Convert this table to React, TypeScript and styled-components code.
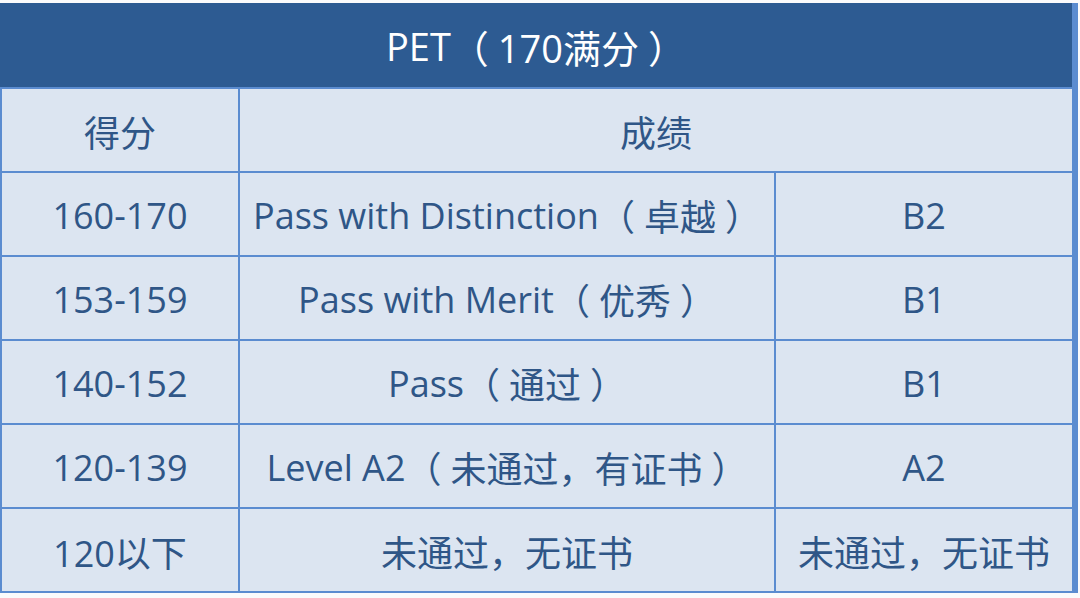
import React from "react";
import styled, { createGlobalStyle } from "styled-components";

const Global = createGlobalStyle`
  html, body { margin: 0; padding: 0; background: #fbfbfc; }
  body { font-family: "Open Sans", "Noto Sans CJK SC", sans-serif; }
`;

const Page = styled.div`
  width: 1080px;
  height: 598px;
  padding-top: 3px;
  box-sizing: border-box;
  background: #fbfbfc;
  overflow: hidden;
`;

const Grid = styled.div`
  display: grid;
  width: 1074px;
  grid-template-columns: 236px 534px 296px;
  grid-template-rows: 84px repeat(6, 82px);
  gap: 2px;
  padding: 0 2px 2px 2px;
  background: #5b8cd0;
`;

const Title = styled.div`
  grid-column: 1 / -1;
  margin: 0 0 0 -2px;
  background: #2d5b92;
  color: #ffffff;
  display: flex;
  align-items: center;
  justify-content: center;
  font-size: 38px;
  font-weight: 400;
  padding-top: 2px;
`;

const Cell = styled.div<{ $span?: number }>`
  grid-column: span ${(p) => p.$span ?? 1};
  background: #dce5f1;
  color: #2f5687;
  display: flex;
  align-items: center;
  justify-content: center;
  font-size: 36px;
  font-weight: 400;
  white-space: nowrap;
  padding-top: 2px;
`;

const OpenParen = styled.span`
  font-family: "Noto Sans CJK SC", sans-serif;
  margin-right: 9px;
`;

const CloseParen = styled.span`
  font-family: "Noto Sans CJK SC", sans-serif;
  margin-left: 9px;
`;

function Txt({ s }: { s: string }) {
  const parts: React.ReactNode[] = [];
  let buf = "";
  let k = 0;
  for (const ch of s) {
    if (ch === "（" || ch === "）") {
      if (buf) parts.push(<span key={k++}>{buf}</span>);
      buf = "";
      parts.push(
        ch === "（" ? <OpenParen key={k++}>（</OpenParen> : <CloseParen key={k++}>）</CloseParen>
      );
    } else buf += ch;
  }
  if (buf) parts.push(<span key={k++}>{buf}</span>);
  return <>{parts}</>;
}

const rows: [string, string, string][] = [
  ["160-170", "Pass with Distinction（卓越）", "B2"],
  ["153-159", "Pass with Merit（优秀）", "B1"],
  ["140-152", "Pass（通过）", "B1"],
  ["120-139", "Level A2（未通过，有证书）", "A2"],
  ["120以下", "未通过，无证书", "未通过，无证书"],
];

export default function App() {
  return (
    <Page>
      <Global />
      <Grid>
        <Title>
          <Txt s="PET（170满分）" />
        </Title>
        <Cell>得分</Cell>
        <Cell $span={2}>成绩</Cell>
        {rows.map((r) => (
          <React.Fragment key={r[0]}>
            <Cell>
              <Txt s={r[0]} />
            </Cell>
            <Cell>
              <Txt s={r[1]} />
            </Cell>
            <Cell>
              <Txt s={r[2]} />
            </Cell>
          </React.Fragment>
        ))}
      </Grid>
    </Page>
  );
}
